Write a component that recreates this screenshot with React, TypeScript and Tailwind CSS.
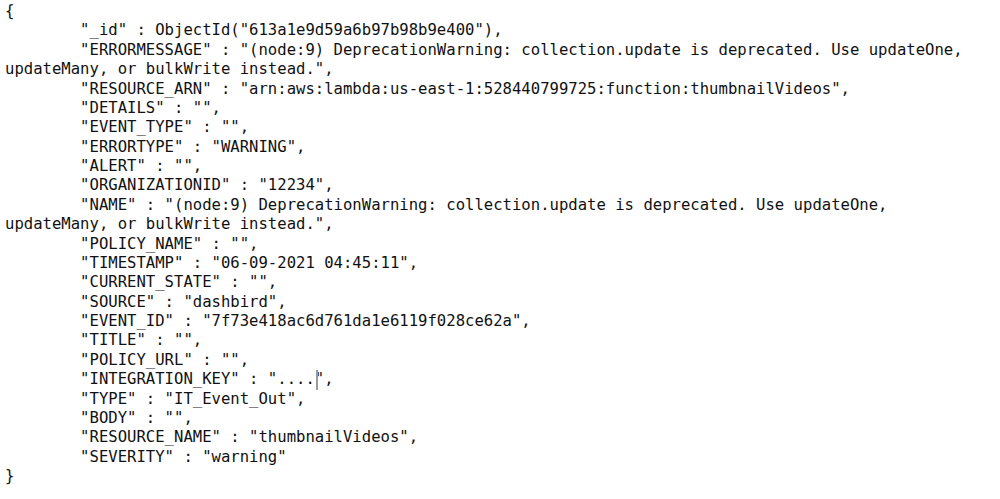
const T = "        ";

const lines: string[] = [
  "{",
  `${T}"_id" : ObjectId("613a1e9d59a6b97b98b9e400"),`,
  `${T}"ERRORMESSAGE" : "(node:9) DeprecationWarning: collection.update is deprecated. Use updateOne,`,
  `updateMany, or bulkWrite instead.",`,
  `${T}"RESOURCE_ARN" : "arn:aws:lambda:us-east-1:528440799725:function:thumbnailVideos",`,
  `${T}"DETAILS" : "",`,
  `${T}"EVENT_TYPE" : "",`,
  `${T}"ERRORTYPE" : "WARNING",`,
  `${T}"ALERT" : "",`,
  `${T}"ORGANIZATIONID" : "12234",`,
  `${T}"NAME" : "(node:9) DeprecationWarning: collection.update is deprecated. Use updateOne,`,
  `updateMany, or bulkWrite instead.",`,
  `${T}"POLICY_NAME" : "",`,
  `${T}"TIMESTAMP" : "06-09-2021 04:45:11",`,
  `${T}"CURRENT_STATE" : "",`,
  `${T}"SOURCE" : "dashbird",`,
  `${T}"EVENT_ID" : "7f73e418ac6d761da1e6119f028ce62a",`,
  `${T}"TITLE" : "",`,
  `${T}"POLICY_URL" : "",`,
  "CURSOR",
  `${T}"TYPE" : "IT_Event_Out",`,
  `${T}"BODY" : "",`,
  `${T}"RESOURCE_NAME" : "thumbnailVideos",`,
  `${T}"SEVERITY" : "warning"`,
  "}",
];

export default function App() {
  return (
    <div className="h-[499px] w-[1000px] overflow-hidden bg-white pl-[5px] pt-[2px] font-['DejaVu_Sans_Mono',monospace] text-[15.6px] leading-[19.375px] text-[#111]">
      {lines.map((line, i) =>
        line === "CURSOR" ? (
          <div key={i} className="whitespace-pre">
            {`${T}"INTEGRATION_KEY" : "....`}
            <span className="relative inline-block h-[19px] w-0 align-top">
              <span className="absolute left-[1px] top-0 h-[20px] w-[2px] bg-[#9a9a9a]" />
            </span>
            {`",`}
          </div>
        ) : (
          <div key={i} className="whitespace-pre">
            {line}
          </div>
        )
      )}
    </div>
  );
}
